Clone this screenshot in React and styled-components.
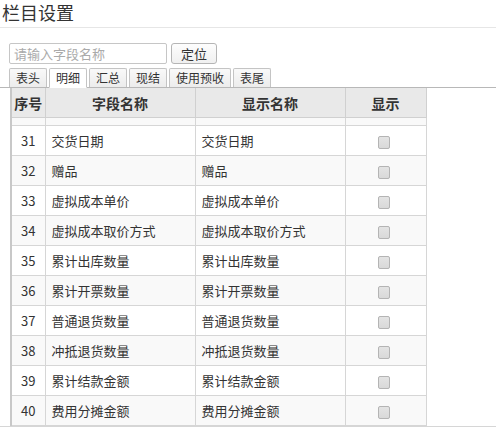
import React from "react";
import styled, { createGlobalStyle } from "styled-components";

const Global = createGlobalStyle`
  html, body { margin: 0; padding: 0; background: #fff; }
  body { font-family: "Microsoft YaHei", "Noto Sans CJK SC", "Liberation Sans", sans-serif; color: #333; }
`;

const Page = styled.div`
  width: 496px;
  display: flex;
  flex-direction: column;
`;

const Title = styled.h1`
  box-sizing: border-box;
  margin: 0;
  height: 28px;
  padding: 1px 0 0 2px;
  font-size: 18px;
  line-height: 22px;
  font-weight: normal;
  color: #333;
  border-bottom: 1px solid #e6e6e6;
`;

const Toolbar = styled.div`
  display: flex;
  align-items: center;
  gap: 4px;
  margin: 15px 0 0 9px;
  height: 21px;
`;

const SearchInput = styled.input`
  box-sizing: border-box;
  width: 158px;
  height: 21px;
  border: 1px solid #c6c6c6;
  border-radius: 2px;
  padding: 0 4px;
  font-family: inherit;
  font-size: 13px;
  color: #333;
  outline: none;
  &::placeholder { color: #aaa; }
`;

const Button = styled.button`
  box-sizing: border-box;
  width: 46px;
  height: 21px;
  border: 1px solid #b5b5b5;
  border-radius: 3px;
  background: linear-gradient(#fdfdfd, #f0f0f0);
  font-family: inherit;
  font-size: 13px;
  line-height: 17px;
  color: #333;
  padding: 0;
`;

const TabBar = styled.div`
  display: flex;
  align-items: flex-end;
  gap: 2px;
  margin-top: 4px;
  padding-left: 9px;
  height: 19px;
  border-bottom: 1px solid #b8b8b8;
`;

const Tab = styled.div`
  box-sizing: border-box;
  height: ${(p) => (p.$active ? "20px" : "19px")};
  margin-bottom: ${(p) => (p.$active ? "-1px" : "0")};
  padding: 0 6px;
  border: 1px solid #c4c4c4;
  border-bottom: ${(p) => (p.$active ? "1px solid #fff" : "none")};
  border-radius: 2px 2px 0 0;
  background: ${(p) => (p.$active ? "#fff" : "linear-gradient(#f9f9f9, #ececec)")};
  font-size: 12px;
  line-height: 18px;
  color: #333;
`;

const TableWrap = styled.div`
  padding-left: 10px;
  border-bottom: 1px solid #d6d6d6;
`;

const Table = styled.table`
  border-collapse: collapse;
  width: 415px;
  table-layout: fixed;
  border-left: 2px solid #c8c8c8;
  border-right: 1px solid #c8c8c8;
`;

const Th = styled.th`
  height: 29px;
  padding: 0;
  background: #e9e9e9;
  border: 1px solid #d0d0d0;
  border-top: none;
  font-size: 14px;
  font-weight: bold;
  color: #333;
  text-align: center;
`;

const Spacer = styled.td`
  height: 7px;
  padding: 0;
  background: #f9f9f9;
  border: 1px solid #d6d6d6;
`;

const Row = styled.tr`
  background: ${(p) => (p.$alt ? "#f9f9f9" : "#fff")};
`;

const Td = styled.td`
  height: 29px;
  padding: 0 0 0 ${(p) => (p.$center ? "0" : "6px")};
  border: 1px solid #d6d6d6;
  font-size: 13px;
  line-height: 17px;
  color: #333;
  text-align: ${(p) => (p.$center ? "center" : "left")};
  white-space: nowrap;
`;

const Check = styled.span`
  display: inline-block;
  vertical-align: middle;
  box-sizing: border-box;
  width: 12px;
  height: 13px;
  margin-left: -4px;
  border: 1px solid #b4b4b4;
  border-radius: 2px;
  background: linear-gradient(#e4e4e4, #d9d9d9);
`;

const rows = [
  [31, "交货日期"],
  [32, "赠品"],
  [33, "虚拟成本单价"],
  [34, "虚拟成本取价方式"],
  [35, "累计出库数量"],
  [36, "累计开票数量"],
  [37, "普通退货数量"],
  [38, "冲抵退货数量"],
  [39, "累计结款金额"],
  [40, "费用分摊金额"],
];

const tabs = ["表头", "明细", "汇总", "现结", "使用预收", "表尾"];

export default function App() {
  return (
    <Page>
      <Global />
      <Title>栏目设置</Title>
      <Toolbar>
        <SearchInput placeholder="请输入字段名称" />
        <Button>定位</Button>
      </Toolbar>
      <TabBar>
        {tabs.map((t) => (
          <Tab key={t} $active={t === "明细"}>{t}</Tab>
        ))}
      </TabBar>
      <TableWrap>
        <Table>
          <colgroup>
            <col style={{ width: 34 }} />
            <col style={{ width: 150 }} />
            <col style={{ width: 150 }} />
            <col style={{ width: 81 }} />
          </colgroup>
          <thead>
            <tr>
              <Th>序号</Th>
              <Th>字段名称</Th>
              <Th>显示名称</Th>
              <Th>显示</Th>
            </tr>
          </thead>
          <tbody>
            <tr>
              <Spacer />
              <Spacer />
              <Spacer />
              <Spacer />
            </tr>
            {rows.map(([n, name], i) => (
              <Row key={n} $alt={i % 2 === 1}>
                <Td $center>{n}</Td>
                <Td>{name}</Td>
                <Td>{name}</Td>
                <Td $center><Check /></Td>
              </Row>
            ))}
          </tbody>
        </Table>
      </TableWrap>
    </Page>
  );
}
